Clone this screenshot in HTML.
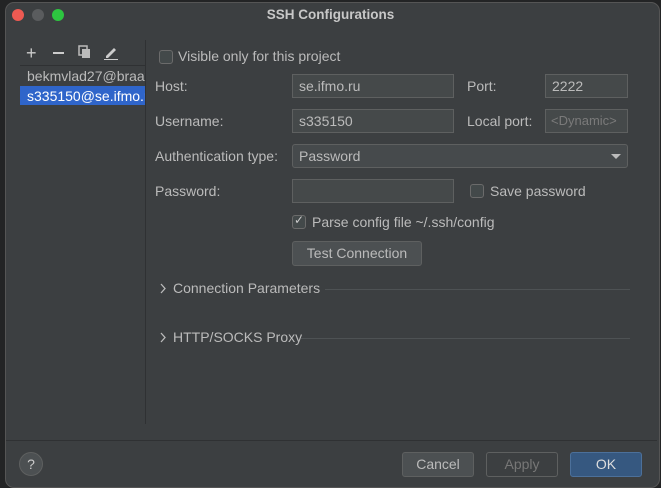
<!DOCTYPE html><html><head><style>
body{margin:0;width:661px;height:487px;background:#232425;font-family:"Liberation Sans",sans-serif;overflow:hidden;position:relative;color:#bbbbbb;font-size:14px}
.w{position:absolute;left:5px;top:2px;width:653px;height:484px;background:#3c3f41;border-radius:9px;border:1px solid #555}
.a{position:absolute}
.f{position:absolute;background:#45494a;border:1px solid #5e6060;box-sizing:border-box;height:24px;padding:3px 6px;color:#bbb;font-size:14px}
.cb{position:absolute;width:14px;height:14px;border:1px solid #6b6b6b;border-radius:3px;background:#43494a;box-sizing:border-box}
.btn{position:absolute;height:25px;box-sizing:border-box;border:1px solid #5e6060;border-radius:3px;background:#4c5052;text-align:center;line-height:23px;color:#bbb}
</style></head><body>
<div class="w"></div>
<div class="a" style="left:12px;top:9px;width:12px;height:12px;border-radius:50%;background:#ee5a52"></div>
<div class="a" style="left:32px;top:9px;width:12px;height:12px;border-radius:50%;background:#5a5c5e"></div>
<div class="a" style="left:52px;top:9px;width:12px;height:12px;border-radius:50%;background:#2dc640"></div>
<div class="a" style="left:0;width:661px;top:7px;text-align:center;font-weight:bold;font-size:13.5px;color:#c8c8c8">SSH Configurations</div>
<div class="a" style="left:145px;top:40px;width:1px;height:384px;background:#2f3133"></div>
<div class="a" style="left:26px;top:43px;font-size:18px;color:#ccc">+</div>
<div class="a" style="left:53px;top:52px;width:11px;height:2px;background:#ccc"></div>
<svg class="a" style="left:78px;top:45px" width="14" height="14"><rect x="1" y="1" width="8" height="9" fill="none" stroke="#bbb" stroke-width="1.5"/><rect x="4" y="4" width="8" height="9" fill="#bbb"/></svg>
<svg class="a" style="left:103px;top:45px" width="16" height="15"><path d="M3 11 L11 3 L13 5 L5 13 L3 13Z" fill="#ccc"/><rect x="1" y="14" width="14" height="1.5" fill="#ccc"/></svg>
<div class="a" style="left:20px;top:65px;width:125px;height:1px;background:#2f3133"></div>
<div class="a" style="left:27px;top:68px;white-space:nowrap;width:118px;overflow:hidden">bekmvlad27@braaves</div>
<div class="a" style="left:20px;top:86px;width:125px;height:19px;background:#2f65ca"></div>
<div class="a" style="left:27px;top:88px;white-space:nowrap;width:118px;overflow:hidden;color:#fff">s335150@se.ifmo.ru</div>
<div class="cb" style="left:159px;top:50px"></div>
<div class="a" style="left:178px;top:48px">Visible only for this project</div>
<div class="a" style="left:155px;top:78px">Host:</div>
<div class="f" style="left:292px;top:74px;width:162px">se.ifmo.ru</div>
<div class="a" style="left:467px;top:78px">Port:</div>
<div class="f" style="left:545px;top:74px;width:83px">2222</div>
<div class="a" style="left:155px;top:113px">Username:</div>
<div class="f" style="left:292px;top:109px;width:162px">s335150</div>
<div class="a" style="left:467px;top:113px">Local port:</div>
<div class="f" style="left:545px;top:109px;width:83px;color:#7a7a7a;padding-left:5px;font-size:13px">&lt;Dynamic&gt;</div>
<div class="a" style="left:155px;top:148px">Authentication type:</div>
<div class="f" style="left:292px;top:144px;width:336px;background:#464a4c;border-radius:3px">Password<span style="position:absolute;right:6px;top:9px;width:0;height:0;border-left:5px solid transparent;border-right:5px solid transparent;border-top:5px solid #bbb"></span></div>
<div class="a" style="left:155px;top:183px">Password:</div>
<div class="f" style="left:292px;top:179px;width:162px"></div>
<div class="cb" style="left:470px;top:184px"></div>
<div class="a" style="left:490px;top:183px">Save password</div>
<div class="cb" style="left:292px;top:215px"></div>
<div class="a" style="left:294px;top:213px;font-size:12px;color:#ccc">✓</div>
<div class="a" style="left:312px;top:214px">Parse config file ~/.ssh/config</div>
<div class="btn" style="left:292px;top:241px;width:130px">Test Connection</div>
<svg class="a" style="left:159px;top:283px" width="8" height="12"><path d="M2 1 L6 5.5 L2 10" fill="none" stroke="#bbb" stroke-width="1.3"/></svg>
<div class="a" style="left:173px;top:280px">Connection Parameters</div>
<div class="a" style="left:325px;top:289px;width:305px;height:1px;background:#4e5254"></div>
<svg class="a" style="left:159px;top:332px" width="8" height="12"><path d="M2 1 L6 5.5 L2 10" fill="none" stroke="#bbb" stroke-width="1.3"/></svg>
<div class="a" style="left:173px;top:329px">HTTP/SOCKS Proxy</div>
<div class="a" style="left:301px;top:338px;width:329px;height:1px;background:#4e5254"></div>
<div class="a" style="left:6px;top:440px;width:651px;height:1px;background:#2f3133"></div>
<div class="a" style="left:19px;top:452px;width:22px;height:22px;border-radius:50%;background:#4c5052;border:1px solid #5e6060;text-align:center;line-height:22px;color:#ccc">?</div>
<div class="btn" style="left:402px;top:452px;width:72px">Cancel</div>
<div class="btn" style="left:486px;top:452px;width:72px;background:#3c3f41;color:#777">Apply</div>
<div class="btn" style="left:570px;top:452px;width:72px;background:#365880;border-color:#4c709a;color:#ddd">OK</div>
</body></html>
